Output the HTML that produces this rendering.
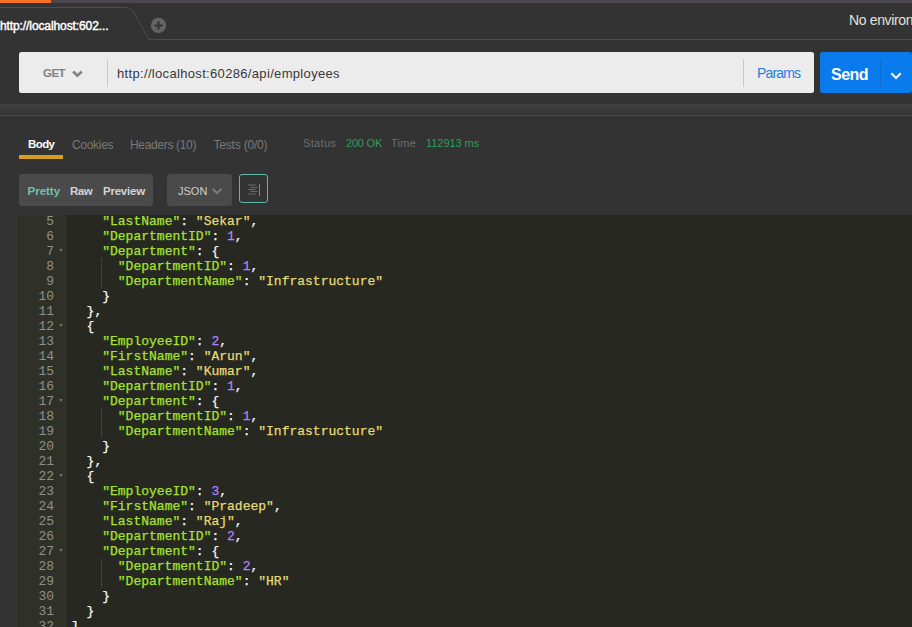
<!DOCTYPE html>
<html><head><meta charset="utf-8"><title>Postman</title>
<style>
*{box-sizing:border-box;margin:0;padding:0}
html,body{width:912px;height:627px;overflow:hidden;background:#333333;font-family:"Liberation Sans",sans-serif;}
.abs{position:absolute}
#top{left:0;top:0;width:912px;height:3px;background:#4b4650}
#top i{position:absolute;left:0;top:0;width:51px;height:3px;background:#f47023}
.t{position:absolute;white-space:nowrap;line-height:1}
#tabtxt{left:0px;top:20px;font-size:12px;font-weight:normal;-webkit-text-stroke:0.45px #fff;color:#fff;letter-spacing:-0.1px}
#noenv{left:849px;top:13px;font-size:14px;color:#e4e2dc;letter-spacing:-0.35px}
#reqbox{left:19px;top:52px;width:795px;height:41px;background:#ececec;border-radius:2.5px}
#sep1{left:107px;top:59px;width:1px;height:28px;background:#c8c8c8}
#sep2{left:743px;top:59px;width:1px;height:28px;background:#c8c8c8}
#get{left:43px;top:68px;font-size:11.5px;font-weight:bold;color:#808080;letter-spacing:-0.5px}
#url{left:117px;top:67px;font-size:13px;color:#383838;letter-spacing:0.33px}
#params{left:757px;top:66px;font-size:14px;color:#257ce8;letter-spacing:-0.85px}
#send{left:820px;top:52px;width:92px;height:41px;background:#097bed;border-radius:3px}
#sendsep{left:880px;top:59px;width:1px;height:28px;background:#0a6ed0}
#sendtxt{left:831px;top:66.5px;font-size:16px;font-weight:bold;color:#fff;letter-spacing:-0.5px}
#band{left:0;top:104px;width:912px;height:11px;background:linear-gradient(#414141,#353535)}
#bandline{left:0;top:115px;width:912px;height:1px;background:#4a4a4a}
.tab{font-size:12px;color:#797979;top:139px}
#body{left:28px;color:#fff;font-weight:bold;font-size:11.5px;letter-spacing:-0.6px}
#bodyul{left:19px;top:155px;width:44px;height:4px;background:#d69e1e}
.st{font-size:11px;top:138px;color:#6e6e6e}
.gr{color:#2f9e5e}
.btn{background:#4a4a4a;border-radius:3px}
.bt{font-size:11.5px;font-weight:bold;color:#d4d4d4;top:186px}
#wrap{left:239px;top:174px;width:29px;height:29px;border:1px solid #5fb8a8;border-radius:3px}
#editor{left:18px;top:215px;width:894px;height:412px;background:#272822;overflow:hidden}
#gutter{position:absolute;left:0;top:0;width:49px;height:413px;background:#2f3129}
.cl{-webkit-text-stroke:0.25px currentColor}
.gl,.cl{height:15px;line-height:15px;font-family:"Liberation Mono",monospace;font-size:13px;white-space:pre}
.gl{color:#8f908a;text-align:right;padding-right:13px;position:relative;font-size:13px}
.fold{position:absolute;right:4px;top:5px;width:0;height:0;border-left:2.75px solid transparent;border-right:2.75px solid transparent;border-top:3.2px solid #6c6d67}
#code{position:absolute;left:53px;top:0;color:#f8f8f2}
#lines{margin-top:-1px}
.guide{position:absolute;left:83px;width:1px;height:30px;background:repeating-linear-gradient(to bottom,#5a5b54 0,#5a5b54 1px,transparent 1px,transparent 2px)}
.k{color:#a6e22e}.s{color:#e6db74}.n{color:#ae81ff}.p{color:#f8f8f2}
</style></head><body>
<div id="top" class="abs"><i></i></div>
<svg class="abs" style="left:0;top:0" width="912" height="50">
<path d="M0 7.5 H125 Q130.5 7.5 133.5 12.3 L149 39.5 H912" fill="none" stroke="#4d4d4d" stroke-width="1"/>
<circle cx="158.5" cy="25.4" r="7.7" fill="#636363"/>
<path d="M154.3 25.4 H162.7 M158.5 21.2 V29.6" stroke="#333" stroke-width="2" fill="none"/>
</svg>
<div id="tabtxt" class="t">http://localhost:602...</div>
<div id="noenv" class="t">No environment</div>

<div id="reqbox" class="abs"></div>
<div id="sep1" class="abs"></div>
<div id="sep2" class="abs"></div>
<div id="get" class="t">GET</div>
<svg class="abs" style="left:71px;top:69px" width="13" height="10"><path d="M2.1 2.5 L6.4 6.7 L10.7 2.5" fill="none" stroke="#808080" stroke-width="2.5"/></svg>
<div id="url" class="t">http://localhost:60286/api/employees</div>
<div id="params" class="t">Params</div>
<div id="send" class="abs"></div>
<div id="sendsep" class="abs"></div>
<div id="sendtxt" class="t">Send</div>
<svg class="abs" style="left:889px;top:69px" width="14" height="13"><path d="M2.3 4.3 L7 9 L11.7 4.3" fill="none" stroke="#fff" stroke-width="2"/></svg>

<div id="band" class="abs"></div>
<div id="bandline" class="abs"></div>

<div id="body" class="t tab">Body</div>
<div id="bodyul" class="abs"></div>
<div class="t tab" style="left:72px;letter-spacing:-0.3px">Cookies</div>
<div class="t tab" style="left:130px;letter-spacing:-0.33px">Headers (10)</div>
<div class="t tab" style="left:213.5px;letter-spacing:-0.2px">Tests (0/0)</div>
<div class="t st" style="left:303px;letter-spacing:0.33px">Status</div>
<div class="t st gr" style="left:346px;letter-spacing:-0.2px">200 OK</div>
<div class="t st" style="left:391px;letter-spacing:0.3px">Time</div>
<div class="t st gr" style="left:426px;letter-spacing:-0.05px">112913 ms</div>

<div class="abs btn" style="left:19px;top:174px;width:134px;height:32px"></div>
<div class="t bt" style="left:27.5px;color:#6fc4ab;letter-spacing:0px">Pretty</div>
<div class="t bt" style="left:70px;letter-spacing:-0.5px">Raw</div>
<div class="t bt" style="left:103px;letter-spacing:-0.23px">Preview</div>
<div class="abs btn" style="left:167px;top:174px;width:65px;height:32px"></div>
<div class="t bt" style="left:178px;top:186px;font-size:11px;font-weight:normal;color:#cfcfcf;letter-spacing:0px">JSON</div>
<svg class="abs" style="left:211px;top:186px" width="13" height="10"><path d="M1.6 2.8 L6 7.2 L10.4 2.8" fill="none" stroke="#7a7a7a" stroke-width="2"/></svg>
<div id="wrap" class="abs"></div>
<svg class="abs" style="left:239px;top:174px" width="29" height="29">
<path d="M9 11 H16.5 M11.5 13.5 H18.5 M9 15.5 H16.5 M11.5 17.5 H18.5 M9 20 H16.5" stroke="#6a6a6a" stroke-width="1" fill="none"/>
<path d="M20.5 10 V22" stroke="#858585" stroke-width="1" fill="none"/>
</svg>

<div id="editor" class="abs">
<div id="gutter"><div id="glines" style="margin-top:-1px">
<div class="gl">5</div>
<div class="gl">6</div>
<div class="gl">7<i class="fold"></i></div>
<div class="gl">8</div>
<div class="gl">9</div>
<div class="gl">10</div>
<div class="gl">11</div>
<div class="gl">12<i class="fold"></i></div>
<div class="gl">13</div>
<div class="gl">14</div>
<div class="gl">15</div>
<div class="gl">16</div>
<div class="gl">17<i class="fold"></i></div>
<div class="gl">18</div>
<div class="gl">19</div>
<div class="gl">20</div>
<div class="gl">21</div>
<div class="gl">22<i class="fold"></i></div>
<div class="gl">23</div>
<div class="gl">24</div>
<div class="gl">25</div>
<div class="gl">26</div>
<div class="gl">27<i class="fold"></i></div>
<div class="gl">28</div>
<div class="gl">29</div>
<div class="gl">30</div>
<div class="gl">31</div>
<div class="gl">32</div>
</div></div>
<div class="guide" style="top:43px"></div><div class="guide" style="top:193px"></div><div class="guide" style="top:343px"></div>
<div id="code"><div id="lines">
<div class="cl">    <span class="k">&quot;LastName&quot;</span><span class="p">: </span><span class="s">&quot;Sekar&quot;</span><span class="p">,</span></div>
<div class="cl">    <span class="k">&quot;DepartmentID&quot;</span><span class="p">: </span><span class="n">1</span><span class="p">,</span></div>
<div class="cl">    <span class="k">&quot;Department&quot;</span><span class="p">: {</span></div>
<div class="cl">      <span class="k">&quot;DepartmentID&quot;</span><span class="p">: </span><span class="n">1</span><span class="p">,</span></div>
<div class="cl">      <span class="k">&quot;DepartmentName&quot;</span><span class="p">: </span><span class="s">&quot;Infrastructure&quot;</span></div>
<div class="cl">    <span class="p">}</span></div>
<div class="cl">  <span class="p">},</span></div>
<div class="cl">  <span class="p">{</span></div>
<div class="cl">    <span class="k">&quot;EmployeeID&quot;</span><span class="p">: </span><span class="n">2</span><span class="p">,</span></div>
<div class="cl">    <span class="k">&quot;FirstName&quot;</span><span class="p">: </span><span class="s">&quot;Arun&quot;</span><span class="p">,</span></div>
<div class="cl">    <span class="k">&quot;LastName&quot;</span><span class="p">: </span><span class="s">&quot;Kumar&quot;</span><span class="p">,</span></div>
<div class="cl">    <span class="k">&quot;DepartmentID&quot;</span><span class="p">: </span><span class="n">1</span><span class="p">,</span></div>
<div class="cl">    <span class="k">&quot;Department&quot;</span><span class="p">: {</span></div>
<div class="cl">      <span class="k">&quot;DepartmentID&quot;</span><span class="p">: </span><span class="n">1</span><span class="p">,</span></div>
<div class="cl">      <span class="k">&quot;DepartmentName&quot;</span><span class="p">: </span><span class="s">&quot;Infrastructure&quot;</span></div>
<div class="cl">    <span class="p">}</span></div>
<div class="cl">  <span class="p">},</span></div>
<div class="cl">  <span class="p">{</span></div>
<div class="cl">    <span class="k">&quot;EmployeeID&quot;</span><span class="p">: </span><span class="n">3</span><span class="p">,</span></div>
<div class="cl">    <span class="k">&quot;FirstName&quot;</span><span class="p">: </span><span class="s">&quot;Pradeep&quot;</span><span class="p">,</span></div>
<div class="cl">    <span class="k">&quot;LastName&quot;</span><span class="p">: </span><span class="s">&quot;Raj&quot;</span><span class="p">,</span></div>
<div class="cl">    <span class="k">&quot;DepartmentID&quot;</span><span class="p">: </span><span class="n">2</span><span class="p">,</span></div>
<div class="cl">    <span class="k">&quot;Department&quot;</span><span class="p">: {</span></div>
<div class="cl">      <span class="k">&quot;DepartmentID&quot;</span><span class="p">: </span><span class="n">2</span><span class="p">,</span></div>
<div class="cl">      <span class="k">&quot;DepartmentName&quot;</span><span class="p">: </span><span class="s">&quot;HR&quot;</span></div>
<div class="cl">    <span class="p">}</span></div>
<div class="cl">  <span class="p">}</span></div>
<div class="cl"><span class="p">]</span></div>
</div></div>
</div>
</body></html>
